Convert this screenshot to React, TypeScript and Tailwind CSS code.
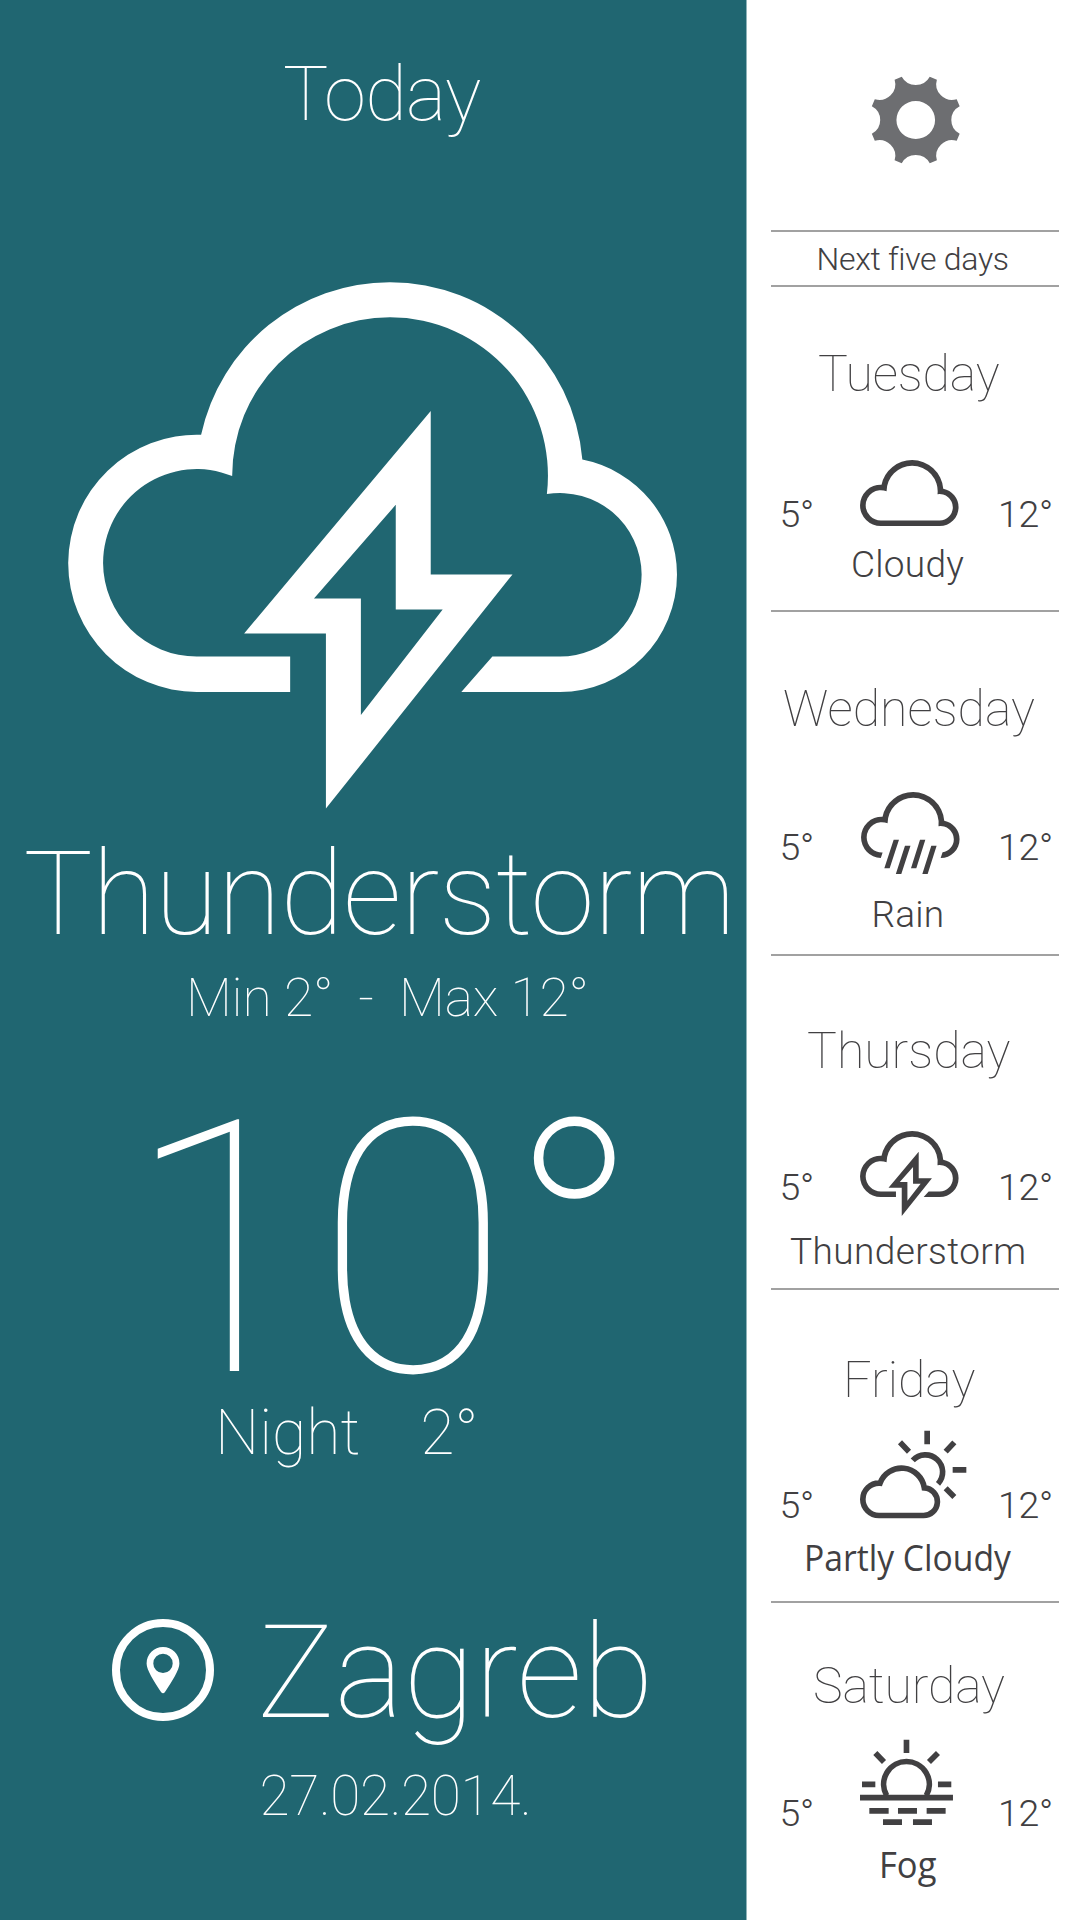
import type { ReactNode } from "react";

const BOLT =
  "M432.1 411V574.4H514.2L326.9 808.6V633.4H244.8ZM397 504.8L314.9 598.5H362V714.9L444.1 609.6H397Z";

const INNER_TOP = "A94 94 0 0 1 232.8 476.1A158.4 158.4 0 0 1 391.2 317.3A158.4 158.4 0 0 1 548.7 494.1A81.9 81.9 0 0 1 643.8 574.4";

const OUTER_TOP =
  "A117.4 117.4 0 0 0 679.3 574.4A117.4 117.4 0 0 0 584.3 459.6A193.8 193.8 0 0 0 391 282.2A193.8 193.8 0 0 0 201.6 434.8A129 129 0 0 0 68.2 563";

const STORM_CLOUD = `M291 656.5H197.2A94 94 0 0 1 103.2 563${INNER_TOP}A81.9 81.9 0 0 1 561.9 656.5H494L462.8 691.9H561.9${OUTER_TOP}A129 129 0 0 0 197.2 691.9H291Z`;

const FULL_CLOUD = `M197.2 656.5A94 94 0 0 1 103.2 563${INNER_TOP}A81.9 81.9 0 0 1 561.9 656.5ZM197.2 691.9H561.9${OUTER_TOP}A129 129 0 0 0 197.2 691.9Z`;

const RAIN_CLOUD = `M202 657A94 94 0 0 1 103.2 563${INNER_TOP}A81.9 81.9 0 0 1 574 655.4L562 691.9${OUTER_TOP}A129 129 0 0 0 191 691.9Z`;

const RAIN_DROPS =
  "M270.6 577.6H303.6L245.8 755.3H212.7ZM340.8 614.8H375L318 790.5H284ZM433.9 577.6H467L411 755.3H378ZM504 614.8H537L481.4 790.5H448.3Z";

function StormIcon({ className }: { className: string }) {
  return (
    <svg
      viewBox="68 282 611.5 527"
      preserveAspectRatio="none"
      className={`overflow-visible ${className}`}
      fill="currentColor"
    >
      <path d={STORM_CLOUD} />
      <path d={BOLT} fillRule="evenodd" />
    </svg>
  );
}

function CloudIcon() {
  return (
    <svg viewBox="68 282 611.5 527" className="h-[85px] w-[98.6px] overflow-visible" fill="currentColor">
      <path d={FULL_CLOUD} fillRule="evenodd" />
    </svg>
  );
}

function RainIcon() {
  return (
    <svg viewBox="68 282 611.5 527" className="h-[85px] w-[98.6px] overflow-visible" fill="currentColor">
      <path d={RAIN_CLOUD} />
      <path d={RAIN_DROPS} />
    </svg>
  );
}

function PartlyCloudyIcon() {
  return (
    <svg viewBox="360 298 321 270" className="h-[90px] w-[107px]" fill="none" stroke="currentColor" strokeWidth="17">
      <path d="M417 554.5A48.5 48.5 0 0 1 368.5 506A48.5 48.5 0 0 1 420 457.6A69 69 0 0 1 553 471.6A41.5 41.5 0 0 1 549 554.5Z" />
      <path d="M518.3 389A51.5 51.5 0 1 1 594 459.5" />
      <path d="M561.5 300V341M638 417.5H679M480 335L507 363M643 335L617 363M617 473L643 499" />
    </svg>
  );
}

function FogIcon() {
  return (
    <svg viewBox="360 357 280 262" className="h-[87.3px] w-[93.3px]" fill="none" stroke="currentColor" strokeWidth="17">
      <path d="M440 527A68.5 68.5 0 1 1 559 527" />
      <path d="M360 533H639M366 493H406M594 493H634M499.5 359V399M406 399L432 426M594 399L567 426" />
      <path d="M388 572.5H446M474 572.5H531M560 572.5H617M429 606.5H486M519 606.5H576" />
    </svg>
  );
}

function gearPath() {
  const point = (deg: number) => {
    const a = (deg * Math.PI) / 180;
    return `${(136 * Math.sin(a)).toFixed(2)} ${(-136 * Math.cos(a)).toFixed(2)}`;
  };
  let d = `M${point(-17.7)}`;
  for (let i = 0; i < 8; i++) {
    d += `A47 47 0 0 0 ${point(i * 45 + 17.7)}L${point(i * 45 + 27.3)}`;
  }
  return d + "ZM-57 0A57 57 0 1 0 57 0A57 57 0 1 0 -57 0Z";
}

function GearIcon() {
  return (
    <svg
      viewBox="-135 -135 270 270"
      preserveAspectRatio="none"
      className="h-[90px] w-[91.5px] text-[#6d6e71]"
      fill="currentColor"
    >
      <path d={gearPath()} fillRule="evenodd" />
    </svg>
  );
}

function LocationIcon() {
  return (
    <svg viewBox="0 0 102 102" className="mt-[11px] size-[102px] shrink-0">
      <circle cx="51" cy="51" r="47" fill="none" stroke="white" strokeWidth="8" />
      <path
        fill="white"
        fillRule="evenodd"
        d="M51 28A16.4 16.4 0 0 1 67.4 44.4C67.4 51 60 62 53 73Q51 75.5 49 73C42 62 34.6 51 34.6 44.4A16.4 16.4 0 0 1 51 28ZM51 34.7A9.7 9.7 0 1 0 51 54.1A9.7 9.7 0 1 0 51 34.7Z"
      />
    </svg>
  );
}

interface DayProps {
  name: string;
  nameClass: string;
  icon: ReactNode;
  iconClass: string;
  tempClass: string;
  label: string;
  labelClass: string;
  className: string;
}

function Day({ name, nameClass, icon, iconClass, tempClass, label, labelClass, className }: DayProps) {
  return (
    <section className={`ml-[24px] w-[288px] border-[#a1a1a1] ${className}`}>
      <h2 className={`h-[50px] text-[50px] leading-none font-thin whitespace-nowrap ${nameClass}`}>{name}</h2>
      <div className="flex h-[90px] items-start">
        <span className={`w-[89px] pl-[8.5px] text-[37.5px] leading-none font-light tracking-[-0.3px] ${tempClass}`}>
          5°
        </span>
        <div className={`w-[138px] shrink-0 ${iconClass}`}>{icon}</div>
        <span className={`text-[37.5px] leading-none font-light tracking-[-0.3px] ${tempClass}`}>12°</span>
      </div>
      <p className={`h-[37px] origin-left leading-none whitespace-nowrap ${labelClass}`}>{label}</p>
    </section>
  );
}

export default function App() {
  return (
    <div className="flex h-[1920px] w-[1080px] overflow-hidden bg-white font-['Roboto',sans-serif]">
      <main className="flex w-[747px] shrink-0 flex-col items-start border-r border-[#8fb3b9] bg-[#206671] font-thin whitespace-pre text-white">
        <h1 className="mt-[56px] ml-[283px] text-[76px] leading-none tracking-[-0.7px]">Today</h1>
        <StormIcon className="mt-[150px] ml-[67.8px] h-[527px] w-[609.2px]" />
        <p className="mt-[27px] ml-[23.5px] text-[116px] leading-none tracking-[-0.75px]">Thunderstorm</p>
        <p className="mt-[19px] ml-[186px] text-[53.5px] leading-[54px] tracking-[-0.25px]">{"Min 2°  -  Max 12°"}</p>
        <p className="mt-[96px] ml-[125.5px] text-[353px] leading-[260px] tracking-[-2.5px]">10°</p>
        <p className="mt-[20px] ml-[215px] text-[62.5px] leading-[63px]">{"Night    2°"}</p>
        <div className="mt-[144px] ml-[112px] flex h-[130px] items-start">
          <LocationIcon />
          <p className="ml-[43px] text-[130px] leading-none">Zagreb</p>
        </div>
        <p className="mt-[31px] ml-[259.5px] text-[55px] leading-none tracking-[-0.4px]">27.02.2014.</p>
      </main>
      <aside className="w-[333px] text-[#414042]">
        <div className="h-[230px] pt-[74.5px] pl-[122.5px]">
          <GearIcon />
        </div>
        <div className="ml-[24px] h-[57px] w-[288px] border-y-2 border-[#a1a1a1] pt-[11px] pl-[45.5px] text-[32px] leading-none font-light tracking-[-0.3px] whitespace-nowrap">
          Next five days
        </div>
        <Day
          className="h-[325px] border-b-2 pt-[62px]"
          name="Tuesday"
          nameClass="pl-[47px] tracking-[-0.1px]"
          icon={<CloudIcon />}
          iconClass="pt-[61.3px]"
          tempClass="pt-[97px]"
          label="Cloudy"
          labelClass="mt-[57px] pl-[80px] text-[37px] font-light tracking-[0.25px]"
        />
        <Day
          className="h-[344px] border-b-2 pt-[72px]"
          name="Wednesday"
          nameClass="pl-[12px]"
          icon={<RainIcon />}
          iconClass="pt-[58.4px] pl-[1px]"
          tempClass="pt-[95px]"
          label="Rain"
          labelClass="mt-[72px] pl-[100.5px] text-[37px] font-light tracking-[0.2px]"
        />
        <Day
          className="h-[334px] border-b-2 pt-[70px]"
          name="Thursday"
          nameClass="pl-[36px]"
          icon={<StormIcon className="h-[85px] w-[98.6px]" />}
          iconClass="pt-[54.6px]"
          tempClass="pt-[93px]"
          label="Thunderstorm"
          labelClass="mt-[67px] pl-[19px] text-[37px] font-light tracking-[0.4px]"
        />
        <Day
          className="h-[313px] border-b-2 pt-[65px]"
          name="Friday"
          nameClass="pl-[72px]"
          icon={<PartlyCloudyIcon />}
          iconClass="pt-[24.5px]"
          tempClass="pt-[82px]"
          label="Partly Cloudy"
          labelClass="mt-[45px] ml-[32.5px] scale-x-[0.935] font-['Open_Sans',sans-serif] text-[36px]"
        />
        <Day
          className="h-[317px] pt-[58px]"
          name="Saturday"
          nameClass="pl-[42px] tracking-[-0.1px]"
          icon={<FogIcon />}
          iconClass="pt-[28.2px]"
          tempClass="pt-[84px]"
          label="Fog"
          labelClass="mt-[45.5px] ml-[107.5px] scale-x-[0.96] font-['Open_Sans',sans-serif] text-[36px]"
        />
      </aside>
    </div>
  );
}
